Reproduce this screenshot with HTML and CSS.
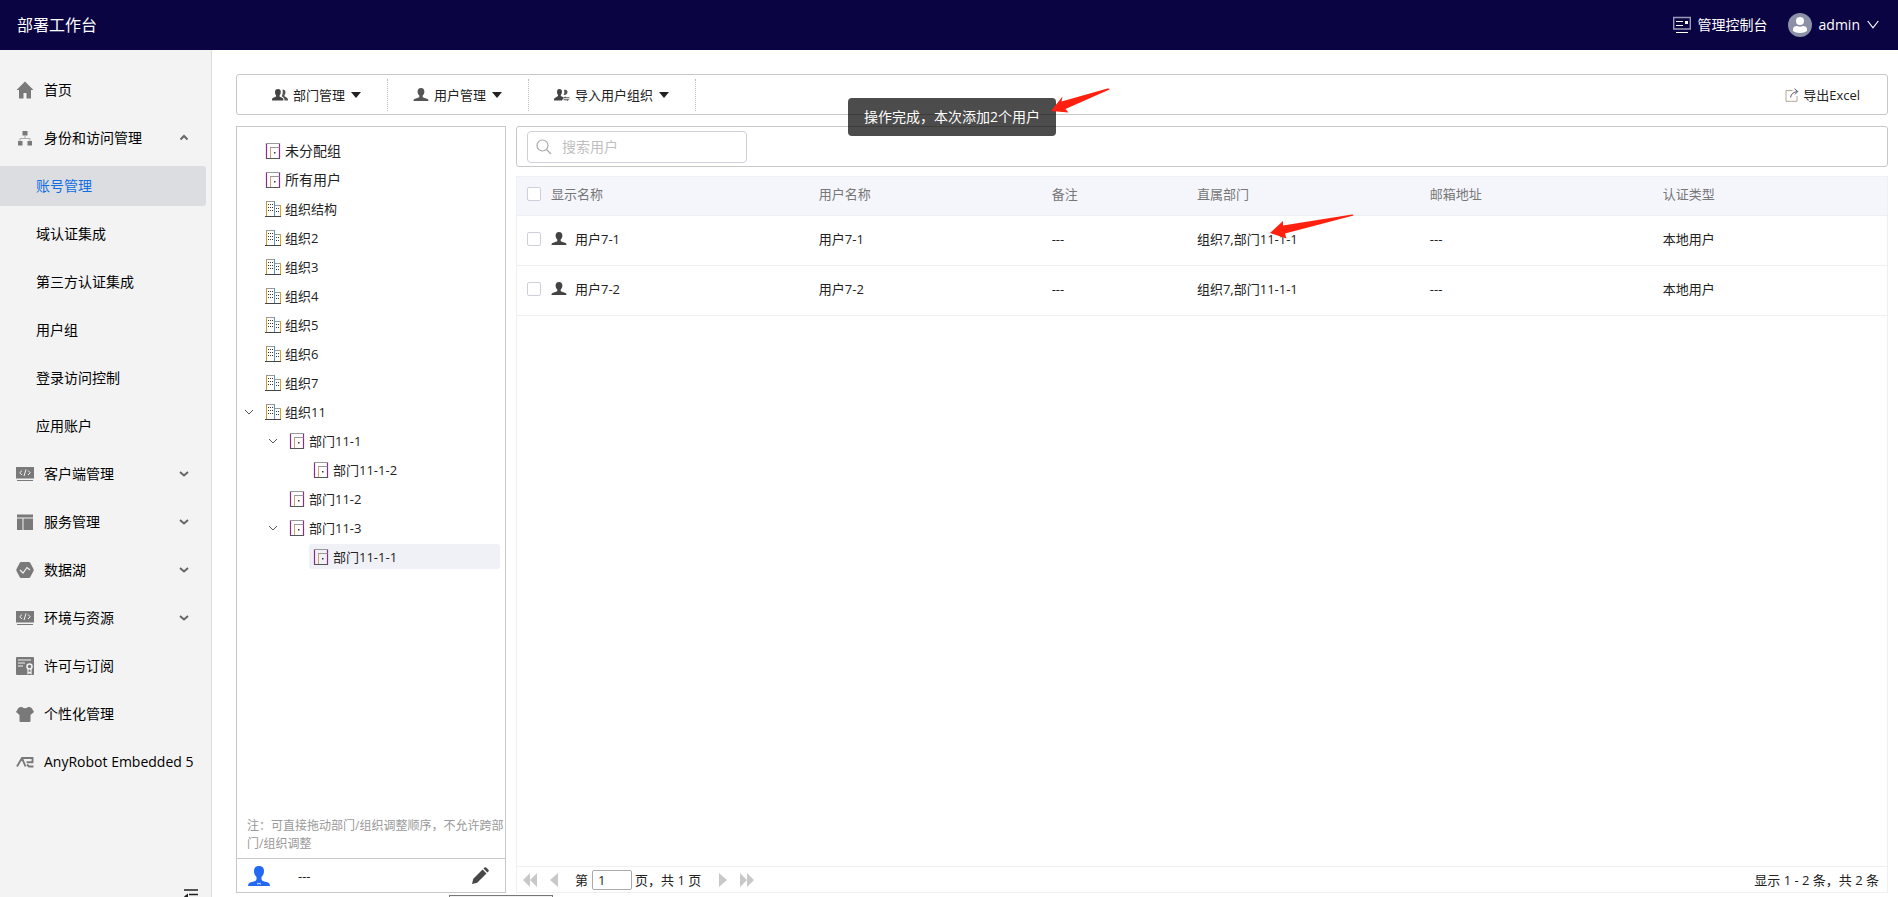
FILE: index.html
```html
<!DOCTYPE html>
<html lang="zh-CN">
<head>
<meta charset="utf-8">
<title>部署工作台</title>
<link rel="stylesheet" href="styles.css">
</head>
<body>
<svg class="sprite" aria-hidden="true">
  <symbol id="dept" viewBox="0 0 16 16"><path d="M1.5 0v16M14.500 0v16" stroke="#8a2b8f" stroke-width="1.200"/><path d="M1 .5h14" stroke="#999"/><path d="M1 15.500h14" stroke="#555"/><path d="M5.500 15V5" stroke="#c9a36a"/><path d="M5 4.500h9.500" stroke="#999"/><path d="M9 9h1.500v1.500H9z" fill="#334"/></symbol>
  <symbol id="org" viewBox="0 0 16 16"><path d="M1.500 0v16" stroke="#c99a3a"/><path d="M1 .5h9M10 4.500h5" stroke="#999"/><path d="M9.500 0v16" stroke="#5a9ab8"/><path d="M15.500 4v12" stroke="#d9a520"/><path d="M0 15.500h16" stroke="#444"/><path d="M3 3.500h5M3 6.500h5M3 9.500h5M11 7.500h3M11 10.500h3" stroke="#333" stroke-dasharray="1 1"/></symbol>
  <symbol id="down" viewBox="0 0 10 10"><path d="M1 3l4 4 4-4" fill="none" stroke="currentColor" stroke-width="1"/></symbol>
  <symbol id="expand" viewBox="0 0 10 10"><path d="M1 3l4 3.500L9 3" fill="none" stroke="#666" stroke-width="2"/></symbol>
  <symbol id="user" viewBox="0 0 16 16"><path d="M8 1c2.300 0 3.400 1.500 3.400 3.600 0 1.900-.8 3.300-1.700 4v1.600l4.800 1.900c.7.3 1 .8 1 1.900H.5c0-1.100.3-1.600 1-1.900l4.800-1.900V8.600c-.9-.7-1.700-2.100-1.700-4C4.600 2.500 5.700 1 8 1z" fill="currentColor"/></symbol>
  <symbol id="code" viewBox="0 0 18 16"><path d="M0 1h18v11.500H0zM1 14h16v1H1z" fill="#797979"/><path d="M6 4.500L3.800 6.700 6 9M12 4.500l2.200 2.200L12 9M10 3.500L8 10" fill="none" stroke="#f3f3f3"/></symbol>
</svg>
<header class="topbar">
  <h1 class="brand">部署工作台</h1>
  <a class="top-link" href="#">
    <svg width="18" height="18" viewBox="0 0 18 18"><path d="M.7 1.500h16.600v11.500H.7z" fill="none" stroke="#9a9ab8" stroke-width="1.400"/><path d="M3 5.500h7M3 9.500h7M3 16.500h12" stroke="#fff" stroke-width="1.200"/><path d="M12 5h3v3h-3z" fill="#fff"/></svg>
    <span>管理控制台</span>
  </a>
  <button class="account" type="button">
    <svg width="24" height="24" viewBox="0 0 24 24"><circle cx="12" cy="12" r="12" fill="#8d91a8"/><circle cx="12" cy="8" r="4" fill="#fff"/><path d="M5 16c0-2 2-3 4-3 2 1 4 1 6 0 2 0 4 1 4 3v2c-3 2.500-11 2.500-14 0z" fill="#fff"/></svg>
    <span>admin</span>
    <svg width="12" height="12" viewBox="0 0 12 12"><path d="M.7 2L6 8.800 11.300 2" fill="none" stroke="#fff" stroke-width="1.200"/></svg>
  </button>
</header>
<div class="body">
  <nav class="sidebar">
    <ul class="menu">
      <li><a class="item" href="#"><svg class="mi" viewBox="0 0 18 18"><path d="M9 .5L17.500 9H15v8.500h-4.500V12h-3v5.500H3V9H.5z" fill="#797979"/></svg>首页</a></li>
      <li><a class="item" href="#"><svg class="mi" viewBox="0 0 18 18"><path d="M6.500 2h5v4.500h-5zM2 12h4.500v4.500H2zM11.500 12H16v4.500h-4.500z" fill="#797979"/><path d="M9 6v3M4 12.500V9.500h10v3" fill="none" stroke="#aaa"/></svg>身份和访问管理<svg class="arrow" viewBox="0 0 10 10"><path d="M1.500 6.500L5 3l3.500 3.500" fill="none" stroke="#666" stroke-width="2"/></svg></a></li>
      <li><a class="item sub active" href="#">账号管理</a></li>
      <li><a class="item sub" href="#">域认证集成</a></li>
      <li><a class="item sub" href="#">第三方认证集成</a></li>
      <li><a class="item sub" href="#">用户组</a></li>
      <li><a class="item sub" href="#">登录访问控制</a></li>
      <li><a class="item sub" href="#">应用账户</a></li>
      <li><a class="item" href="#"><svg class="mi"><use href="#code"/></svg>客户端管理<svg class="arrow"><use href="#expand"/></svg></a></li>
      <li><a class="item" href="#"><svg class="mi" viewBox="0 0 18 18"><path d="M1 1.500h16v3H1zM1 5.500h5.500V17H1zM7.500 5.500H17V17H7.500z" fill="#797979"/></svg>服务管理<svg class="arrow"><use href="#expand"/></svg></a></li>
      <li><a class="item" href="#"><svg class="mi" viewBox="0 0 18 18"><path d="M5 1h8q.8 0 1.200.8L17.500 8q.5 1 0 2l-3.300 6.200q-.4.800-1.200.8H5q-.8 0-1.200-.8L.5 10q-.5-1 0-2l3.300-6.200Q4.200 1 5 1z" fill="#797979"/><path d="M4 9l3 3 4-5.500L14 9" fill="none" stroke="#f3f3f3" stroke-width="1.200"/></svg>数据湖<svg class="arrow"><use href="#expand"/></svg></a></li>
      <li><a class="item" href="#"><svg class="mi"><use href="#code"/></svg>环境与资源<svg class="arrow"><use href="#expand"/></svg></a></li>
      <li><a class="item" href="#"><svg class="mi" viewBox="0 0 18 18"><rect width="18" height="18" rx="1" fill="#797979"/><path d="M2 3h13M2 6h7M2 9h5" stroke="#f3f3f3"/><circle cx="13.500" cy="9.500" r="2.500" fill="none" stroke="#f3f3f3" stroke-width="1.500"/><path d="M12 12v4.500l1.500-1.200 1.500 1.200V12" fill="none" stroke="#f3f3f3" stroke-width="1.200"/></svg>许可与订阅</a></li>
      <li><a class="item" href="#"><svg class="mi" viewBox="0 0 18 18"><path d="M4.500 2H6q3 2.500 6 0h1.500q1.500 0 2.500 1.500L18 7l-3.500 3v6q0 1-1 1h-9q-1 0-1-1v-6L0 7l2-3.500Q3 2 4.500 2z" fill="#797979"/></svg>个性化管理</a></li>
      <li><a class="item" href="#"><svg class="mi" viewBox="0 0 18 18"><path d="M1 13.500L6 5H16.500v4.200H10.500M6 5l3.500 8.500M11 11.500l2 2h4.500" fill="none" stroke="#797979" stroke-width="1.900"/></svg>AnyRobot Embedded 5</a></li>
    </ul>
    <button class="fold" type="button" aria-label="收起菜单"><svg width="14" height="14" viewBox="0 0 14 14"><path d="M0 1h14M5 5.500h9M5 9.500h9M0 13.500h14" stroke="#222" stroke-width="1.300"/><path d="M0 7.500L4 4.500v6z" fill="#222"/></svg></button>
  </nav>
  <main class="main">
    <div class="toolbar">
      <button class="tool" type="button"><svg width="16" height="16" viewBox="0 0 16 16"><path d="M6 2c2 0 2.800 1.300 2.800 3S8 8 7.500 8.500v1l3 1.500c.7.400.9 1 .9 2.500H0c0-1.500.2-2.100.9-2.500l3.200-1.500v-1C3.600 8 3 6.700 3 5s1-3 3-3z" fill="#444"/><path d="M10.500 2.500c2 0 3 1 3 2.800 0 1.500-.5 2.300-1 2.900v1l2.200 1.300c.8.500 1.300 1 1.300 3h-3.500c0-2-.5-2.800-2.800-4.200 1-1.300 1.300-5 .8-6.800z" fill="#555"/></svg><span>部门管理</span><i class="caret"></i></button>
      <button class="tool" type="button"><svg width="16" height="16"><use href="#user"/></svg><span>用户管理</span><i class="caret"></i></button>
      <button class="tool" type="button"><svg width="16" height="16" viewBox="0 0 16 16"><path d="M5.500 2c1.800 0 2.500 1.200 2.500 2.800S7.300 7.500 6.800 8v1l3 1.500L8 13.500H0c0-1.500.2-2.100.9-2.500L4 9V8c-.5-.5-1-1.600-1-3.200S3.700 2 5.500 2z" fill="#444"/><path d="M10 3c2.500-.8 3.500.5 3.500 2 0 1.700-1.700 3-2.700 3H9.500C10.500 7 10.500 5 10 3zM8.500 11.500l3-2.300V10.200H15.500v1.100H8.500zM9.500 12.300h6l-2.500 2v-1H9.500z" fill="#555"/></svg><span>导入用户组织</span><i class="caret"></i></button>
      <button class="export" type="button"><svg width="14" height="14" viewBox="0 0 14 14"><path d="M7.500 2.500H1v10.800h11V8" fill="none" stroke="#b5a794"/><path d="M5.500 9.500C6 6 8.500 4 12.500 3.500M9.500.8l3.300 2.700L10 6.300" fill="none" stroke="#556"/></svg><span>导出Excel</span></button>
    </div>
    <div class="panels">
      <aside class="tree-panel">
        <div class="tree-box">
          <ul class="tree">
            <li><button class="node wide" type="button"><svg class="ni"><use href="#dept"/></svg>未分配组</button></li>
            <li><button class="node wide" type="button"><svg class="ni"><use href="#dept"/></svg>所有用户</button></li>
            <li><button class="node" type="button"><svg class="ni"><use href="#org"/></svg>组织结构</button></li>
            <li><button class="node" type="button"><svg class="ni"><use href="#org"/></svg>组织2</button></li>
            <li><button class="node" type="button"><svg class="ni"><use href="#org"/></svg>组织3</button></li>
            <li><button class="node" type="button"><svg class="ni"><use href="#org"/></svg>组织4</button></li>
            <li><button class="node" type="button"><svg class="ni"><use href="#org"/></svg>组织5</button></li>
            <li><button class="node" type="button"><svg class="ni"><use href="#org"/></svg>组织6</button></li>
            <li><button class="node" type="button"><svg class="ni"><use href="#org"/></svg>组织7</button></li>
            <li class="open"><svg class="twist"><use href="#down"/></svg><button class="node" type="button"><svg class="ni"><use href="#org"/></svg>组织11</button>
              <ul>
                <li class="open"><svg class="twist"><use href="#down"/></svg><button class="node" type="button"><svg class="ni"><use href="#dept"/></svg>部门11-1</button>
                  <ul><li><button class="node" type="button"><svg class="ni"><use href="#dept"/></svg>部门11-1-2</button></li></ul></li>
                <li><button class="node" type="button"><svg class="ni"><use href="#dept"/></svg>部门11-2</button></li>
                <li class="open"><svg class="twist"><use href="#down"/></svg><button class="node" type="button"><svg class="ni"><use href="#dept"/></svg>部门11-3</button>
                  <ul><li><button class="node selected" type="button"><svg class="ni"><use href="#dept"/></svg>部门11-1-1</button></li></ul></li>
              </ul></li>
          </ul>
          <p class="note">注：可直接拖动部门/组织调整顺序，不允许跨部门/组织调整</p>
        </div>
        <div class="owner">
          <svg width="22" height="22" viewBox="0 0 22 22"><path d="M11 1c3.300 0 5 1.800 5 5 0 2.800-1 4.500-2.500 6v2.500l1.200 1.500 5.300 1.500q2 .7 2 3.500H0q0-2.800 2-3.500L7.300 16l1.200-1.500V12C7 10.500 6 8.800 6 6c0-3.200 1.700-5 5-5z" fill="#2468f2"/><path d="M9.500 17.500L11 18.500 9.500 20zM12.500 17.500L11 18.500l1.500 1.500z" fill="#fff"/></svg>
          <span>---</span>
          <button class="edit" type="button" aria-label="编辑"><svg width="18" height="18" viewBox="0 0 18 18"><path d="M1 17l1.300-5.200 9.300-9.300 3.900 3.900-9.300 9.300zM12.500 1.600l1-1q.8-.8 1.700 0l2.200 2.200q.8.800 0 1.700l-1 1z" fill="#484848"/></svg></button>
        </div>
      </aside>
      <section class="users">
        <div class="searchbar">
          <label class="search"><svg width="16" height="16" viewBox="0 0 16 16"><circle cx="6.500" cy="6.500" r="5.500" fill="none" stroke="#aaa" stroke-width="1.200"/><path d="M10.500 10.500L15 15" stroke="#aaa" stroke-width="1.300"/></svg><input type="text" placeholder="搜索用户" aria-label="搜索用户"></label>
        </div>
        <div class="grid">
          <table>
            <thead>
              <tr><th class="c-name"><div class="cell"><input type="checkbox" aria-label="全选">显示名称</div></th><th class="c-std">用户名称</th><th class="c-note">备注</th><th class="c-std">直属部门</th><th class="c-std">邮箱地址</th><th>认证类型</th></tr>
            </thead>
            <tbody>
              <tr><td><div class="cell"><input type="checkbox" aria-label="用户7-1"><svg width="16" height="16"><use href="#user"/></svg>用户7-1</div></td><td>用户7-1</td><td>---</td><td>组织7,部门11-1-1</td><td>---</td><td>本地用户</td></tr>
              <tr><td><div class="cell"><input type="checkbox" aria-label="用户7-2"><svg width="16" height="16"><use href="#user"/></svg>用户7-2</div></td><td>用户7-2</td><td>---</td><td>组织7,部门11-1-1</td><td>---</td><td>本地用户</td></tr>
            </tbody>
          </table>
          <div class="pager">
            <button type="button" aria-label="首页"><svg width="14" height="14" viewBox="0 0 14 14"><path d="M7 0v14L0 7zM14 0v14L7 7z"/></svg></button>
            <button type="button" aria-label="上一页"><svg width="8" height="14" viewBox="0 0 8 14"><path d="M8 0v14L0 7z"/></svg></button>
            <label class="page">第<input type="text" value="1"></label>
            <span class="total">页，共 1 页</span>
            <button type="button" aria-label="下一页"><svg width="8" height="14" viewBox="0 0 8 14"><path d="M0 0v14l8-7z"/></svg></button>
            <button type="button" aria-label="末页"><svg width="14" height="14" viewBox="0 0 14 14"><path d="M0 0v14l7-7zM7 0v14l7-7z"/></svg></button>
            <span class="count">显示 1 - 2 条，共 2 条</span>
          </div>
        </div>
      </section>
    </div>
  </main>
</div>
<div class="toast" role="status">操作完成，本次添加2个用户</div>
<svg class="mark mark-toast" width="60" height="26" viewBox="0 0 60 26"><path d="M1 23L12.500 8.500 11.500 13.500 57.500 0.500Q60 0 59.500 1.500L15.500 21 18.500 24.500z" fill="#ff2010"/></svg>
<svg class="mark mark-dept" width="84" height="26" viewBox="0 0 84 26"><path d="M0 19L13 7 13 11.500 82 .5Q84 .5 83.500 1.500L15 19.500 16.500 24.500z" fill="#ff2010"/></svg>
<div class="status-tip"></div>
</body>
</html>
```

FILE: styles.css
```css
* { box-sizing: border-box; }
body {
  margin: 0;
  height: 100vh;
  overflow: hidden;
  display: flex;
  flex-direction: column;
  font: 13px/20px "Open Sans", "Noto Sans CJK SC", sans-serif;
  color: #222;
  background: #fff;
}
ul { list-style: none; margin: 0; padding: 0; }
a { color: inherit; text-decoration: none; }
button { font: inherit; color: inherit; background: none; border: 0; padding: 0; }
svg { flex: none; }
.sprite { position: absolute; width: 0; height: 0; }

.topbar {
  flex: none;
  height: 50px;
  display: flex;
  align-items: center;
  padding: 0 19px 0 17px;
  background: #0a0443;
  color: #fff;
  font-size: 14px;
}
.brand { margin: 0 auto 0 0; font-size: 16px; line-height: 24px; font-weight: 400; }
.top-link { display: flex; align-items: center; gap: 7px; margin-right: 20px; }
.account { display: flex; align-items: center; gap: 7px; }

.body { flex: 1; min-height: 0; display: flex; }
.sidebar {
  flex: none;
  width: 212px;
  display: flex;
  flex-direction: column;
  justify-content: space-between;
  padding-top: 20px;
  background: #f3f3f3;
  border-right: 1px solid #dcdcdc;
  overflow: hidden;
}
.menu { display: flex; flex-direction: column; gap: 8px; padding-right: 5px; }
.item {
  display: flex;
  align-items: center;
  height: 40px;
  padding: 0 17px 0 16px;
  font-size: 14px;
  color: #000;
  white-space: nowrap;
  border-radius: 0 3px 3px 0;
}
.mi { width: 18px; height: 18px; margin-right: 10px; }
.arrow { width: 10px; height: 10px; margin-left: auto; }
.sub { padding-left: 36px; }
.active { background: #dcdde1; color: #126ee3; }
.fold { flex: none; height: 8px; align-self: flex-end; margin-right: 13px; }
.fold svg { display: block; }

.main {
  flex: 1;
  min-width: 0;
  display: flex;
  flex-direction: column;
  gap: 11px;
  padding: 24px 10px 4px 24px;
}
.toolbar {
  flex: none;
  height: 41px;
  display: flex;
  align-items: center;
  border: 1px solid #c8c8c8;
  border-radius: 3px;
}
.tool {
  display: flex;
  align-items: center;
  height: 32px;
  padding: 0 26px 0 25px;
  border-right: 1px dotted #bbb;
}
.tool:first-child { padding-left: 35px; }
.tool span { margin: 0 6px 0 5px; }
.caret { border: 5px solid transparent; border-top: 6px solid #222; border-bottom: 0; }
.export { display: flex; align-items: center; gap: 4px; margin-left: auto; padding-right: 27px; }

.panels { flex: 1; min-height: 0; display: flex; gap: 10px; }
.tree-panel { flex: none; width: 270px; display: flex; flex-direction: column; }
.tree-box {
  flex: 1;
  min-height: 0;
  display: flex;
  flex-direction: column;
  justify-content: space-between;
  border: 1px solid #c8c8c8;
  border-bottom: 0;
}
.tree { padding: 11px 5px 0 24px; }
.tree ul { padding-left: 24px; }
.tree li { display: grid; grid-template-columns: 100%; }
.tree .open { margin-left: -24px; grid-template-columns: 24px 1fr; }
.open > ul { grid-column: 1 / -1; padding-left: 48px; }
.twist { width: 10px; height: 10px; margin: 8px 0 0 7px; color: #555; }
.node {
  display: flex;
  align-items: center;
  gap: 4px;
  height: 25px;
  margin-bottom: 4px;
  padding-left: 4px;
  border-radius: 3px;
  text-align: left;
}
.wide { font-size: 14px; }
.ni { width: 16px; height: 16px; }
.selected { background: #f0f1f7; }
.note { margin: 0; padding: 0 0 5px 10px; font-size: 12px; line-height: 18px; color: #999; }
.owner {
  flex: none;
  display: flex;
  align-items: center;
  height: 35px;
  padding: 0 16px 0 11px;
  border: 1px solid #c8c8c8;
}
.owner span { margin: 0 auto 0 28px; }
.edit { display: flex; }

.users { flex: 1; min-width: 0; display: flex; flex-direction: column; gap: 9px; }
.searchbar {
  flex: none;
  height: 41px;
  padding: 4px 10px;
  border: 1px solid #c8c8c8;
  border-radius: 3px;
}
.search {
  display: flex;
  align-items: center;
  gap: 10px;
  width: 220px;
  height: 32px;
  padding: 0 8px;
  border: 1px solid #cfcfdc;
  border-radius: 4px;
}
.search input { flex: 1; min-width: 0; border: 0; padding: 0; outline: 0; background: none; font: inherit; font-size: 14px; }
.search input::placeholder { color: #bfbfbf; }
.grid {
  flex: 1;
  min-height: 0;
  display: flex;
  flex-direction: column;
  justify-content: space-between;
  border: 1px solid #f0f0f2;
}
table { width: 100%; table-layout: fixed; border-collapse: collapse; }
th, td { padding: 0 10px 2px; text-align: left; font-weight: 400; border-bottom: 1px solid #efeff1; }
th { height: 38px; padding-bottom: 4px; background: #f5f6fc; color: #777; }
td { height: 50px; }
.c-name { width: 21.3%; }
.c-std { width: 17%; }
.c-note { width: 10.6%; }
.cell { display: flex; align-items: center; }
input[type="checkbox"] {
  appearance: none;
  width: 14px;
  height: 14px;
  margin: 0 10px 0 0;
  border: 1px solid #cfcfdc;
  border-radius: 2px;
  background: #fff;
}
.cell svg { margin-right: 8px; color: #444; }
.tool svg { color: #555; }
.pager {
  flex: none;
  display: flex;
  align-items: center;
  height: 26px;
  padding: 0 8px 0 6px;
  border-top: 1px solid #f0f0f2;
}
.pager button { display: flex; margin-right: 13px; }
.pager svg { fill: #c8c8c8; }
.page { display: flex; align-items: center; gap: 4px; margin: 0 3px 0 4px; }
.page input { width: 40px; height: 20px; padding: 0 5px; border: 1px solid #aaa; border-radius: 2px; font: inherit; color: inherit; }
.total { margin-right: 18px; }
.count { margin-left: auto; }

.toast {
  position: absolute;
  top: 98px;
  left: 50%;
  margin-left: -101px;
  padding: 9px 16px;
  border-radius: 4px;
  background: rgba(0, 0, 0, .7);
  color: #fff;
  font-size: 14px;
}
.mark { position: absolute; }
.mark-toast { left: 1050px; top: 88px; }
.mark-dept { left: 1270px; top: 214px; }
.status-tip {
  position: absolute;
  left: 449px;
  bottom: -18px;
  width: 104px;
  height: 20px;
  border: 1px solid #777;
  background: #f2f2f2;
}
```
